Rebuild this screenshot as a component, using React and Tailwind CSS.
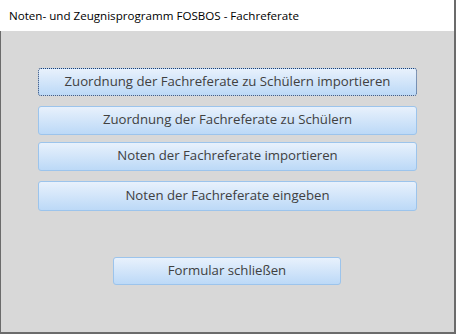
import React from 'react'

const btn =
    'flex items-center justify-center rounded-[3px] border bg-gradient-to-b from-[#e8f1fc] to-[#bcd9f7] text-[13.2px] text-[#404040] pb-[1px]'

const App = () => {
    return (
        <div className="flex flex-col w-[456px] h-[334px] font-['Open_Sans',sans-serif]">
            {/* title bar */}
            <div className="h-[31px] flex items-center pl-[9px] bg-white border-r-2 border-[#6b6b6b] text-[11.6px] text-black">
                Noten- und Zeugnisprogramm FOSBOS - Fachreferate
            </div>
            {/* form body */}
            <div className="flex-1 flex flex-col bg-[#d8d8d8] border-l border-r-2 border-b-2 border-[#6b6b6b] pl-[37px]">
                <div className={`${btn} border-dotted border-[#1f3f70] mt-[37px] w-[379px] h-[28px]`}>
                    Zuordnung der Fachreferate zu Schülern importieren
                </div>
                <div className={`${btn} border-[#9cc4ec] mt-[10px] w-[379px] h-[29px]`}>
                    Zuordnung der Fachreferate zu Schülern
                </div>
                <div className={`${btn} border-[#9cc4ec] mt-[7px] w-[379px] h-[29px]`}>
                    Noten der Fachreferate importieren
                </div>
                <div className={`${btn} border-[#9cc4ec] mt-[10px] w-[379px] h-[30px]`}>
                    Noten der Fachreferate eingeben
                </div>
                <div className={`${btn} border-[#9cc4ec] mt-[46px] ml-[75px] w-[228px] h-[28px]`}>
                    Formular schließen
                </div>
            </div>
        </div>
    )
}

export default App
